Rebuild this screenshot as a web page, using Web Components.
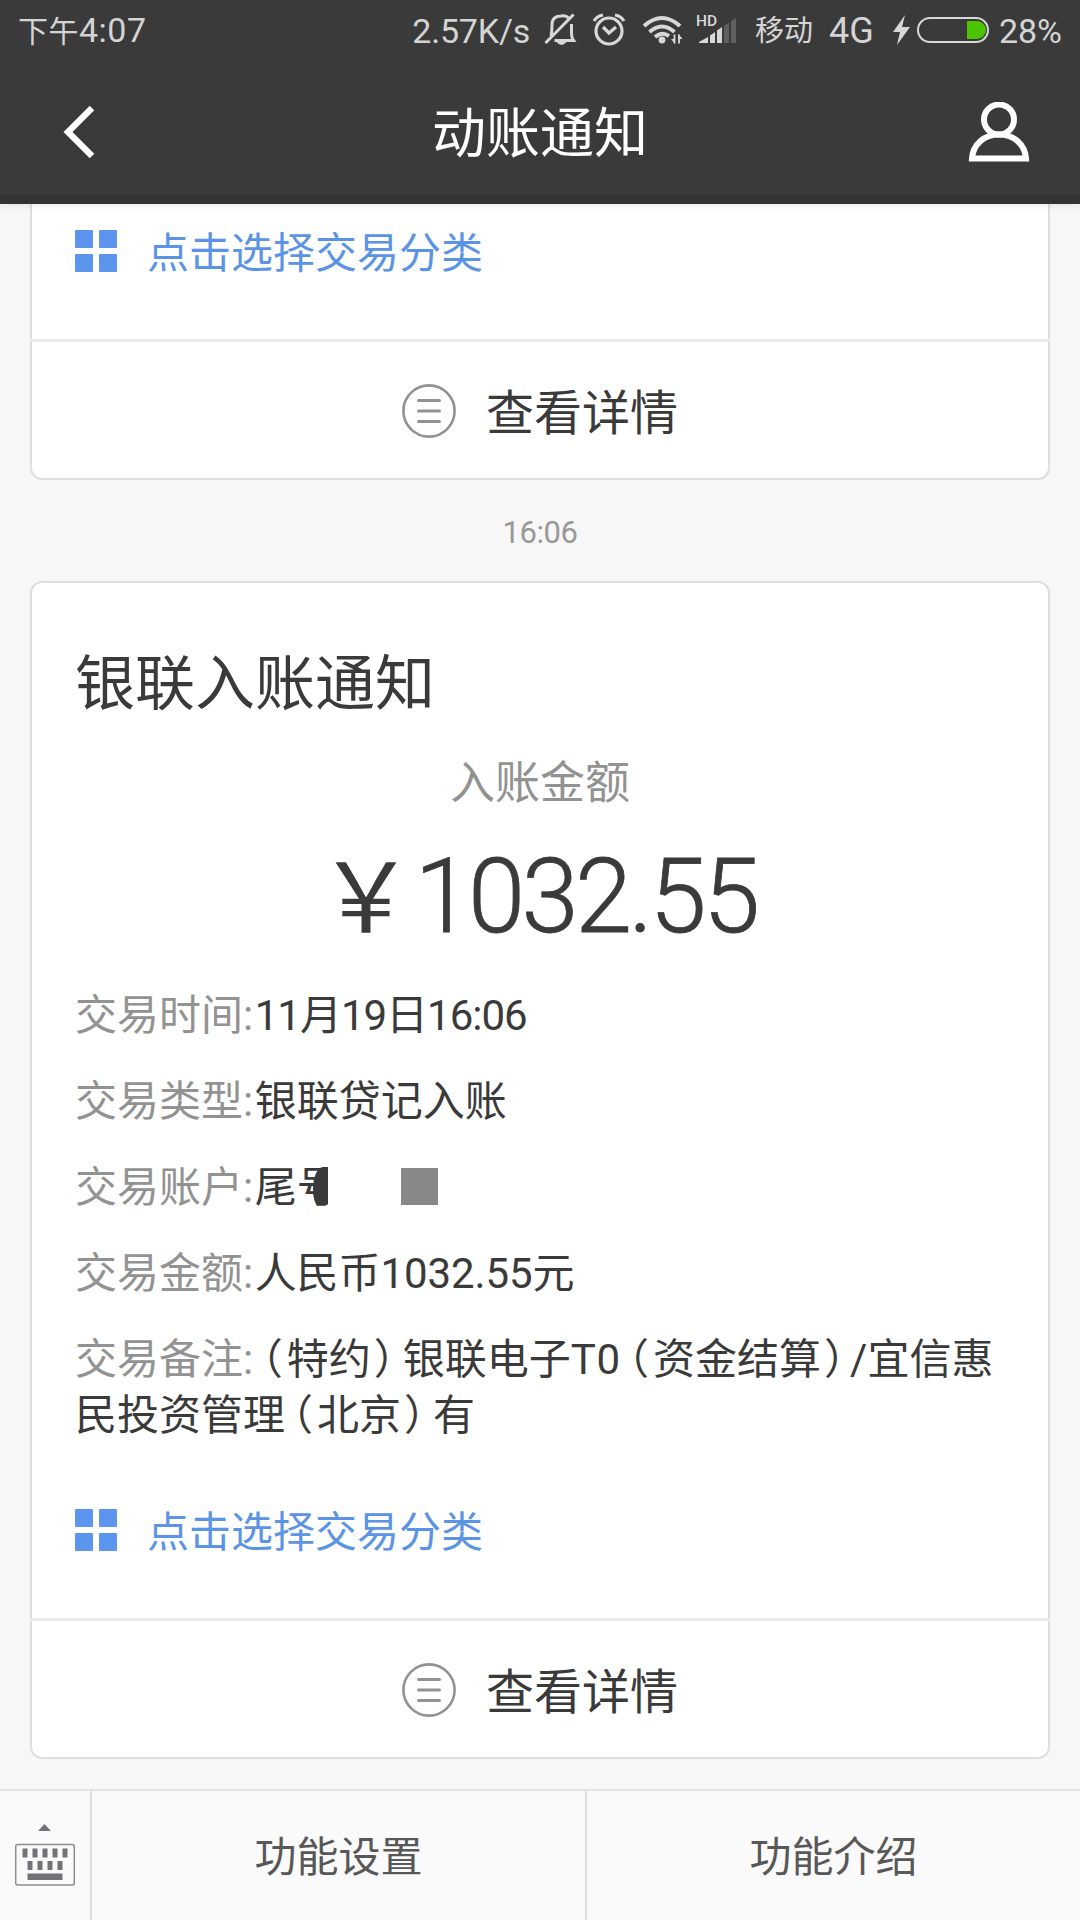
<!DOCTYPE html>
<html lang="zh-CN">
<head>
<meta charset="utf-8">
<title>动账通知</title>
<style>
  html, body {
    margin: 0;
    padding: 0;
  }
  body {
    width: 1080px;
    height: 1920px;
    overflow: hidden;
    display: flex;
    flex-direction: column;
    background: #f7f7f7;
    color: #3a3a3a;
    font-family: Roboto, "Noto Sans CJK SC", sans-serif;
  }
  main {
    flex: 1;
    min-height: 0;
    padding: 0 30px;
  }
  time {
    display: block;
    height: 101px;
    line-height: 105px;
    text-align: center;
    font-size: 31px;
    letter-spacing: -0.4px;
    color: #999;
  }
  .figure {
    font-size: 103px;
    font-weight: 300;
    letter-spacing: -3.6px;
    -webkit-text-stroke: 0.8px;
  }
  .narrow {
    letter-spacing: -1px;
  }
  .wide {
    letter-spacing: -0.1px;
  }
  /* full-width brackets set tighter than one em */
  .open, .close {
    font-feature-settings: "halt";
  }
  .open {
    margin: 0 4px 0 7px;
  }
  .close {
    margin: 0 8px 0 3px;
  }
  .close.tight {
    margin-right: 5px;
  }
  .code {
    letter-spacing: 0.8px;
  }
</style>
</head>
<body>
  <status-bar></status-bar>
  <nav-header>动账通知</nav-header>
  <main>
    <notice-card clipped>
      <category-link>点击选择交易分类</category-link>
      <span slot="action">查看详情</span>
    </notice-card>
    <time>16:06</time>
    <notice-card>
      <amount-summary>
        <span slot="title">银联入账通知</span>
        <span slot="caption">入账金额</span>
        <span slot="amount">￥<span class="figure">1032.55</span></span>
      </amount-summary>
      <detail-row label="交易时间:"><span class="narrow">11月19日16:06</span></detail-row>
      <detail-row label="交易类型:">银联贷记入账</detail-row>
      <detail-row label="交易账户:">尾<masked-text>号</masked-text></detail-row>
      <detail-row label="交易金额:"><span class="wide">人民币1032.55元</span></detail-row>
      <detail-row label="交易备注:"><span class="open">（</span>特约<span class="close">）</span>银联电子<span class="code">T0</span><span class="open">（</span>资金结算<span class="close tight">）</span>/宜信惠<br>民投资管理<span class="open">（</span>北京<span class="close">）</span>有</detail-row>
      <category-link>点击选择交易分类</category-link>
      <span slot="action">查看详情</span>
    </notice-card>
  </main>
  <tab-bar>
    <span slot="left">功能设置</span>
    <span slot="right">功能介绍</span>
  </tab-bar>

<script>
'use strict'
;(function() {
  // registers an element whose shadow root holds the given markup
  function define(name, html, setup) {
    customElements.define(name, class extends HTMLElement {
      constructor() {
        super()
        const shadow = this.attachShadow({ mode: 'open' })
        shadow.innerHTML = html
      }
      connectedCallback() {
        if (setup) setup(this, this.shadowRoot)
      }
    })
  }

  define('status-bar', `
    <style>
      :host {
        display: flex;
        align-items: center;
        flex: none;
        box-sizing: border-box;
        height: 62px;
        padding: 0 18px;
        background: #3a3a3a;
        color: #d4d4d4;
        font-size: 34px;
        line-height: 62px;
        white-space: nowrap;
      }
      svg { flex: none; display: block; }
      .cjk { font-size: 30px; }
      .clock { letter-spacing: 0.5px; }
      .speed { margin-left: auto; margin-right: 14px; letter-spacing: -0.2px; }
      .carrier { margin-left: 17px; margin-right: 16px; font-size: 29px; }
      .network { font-size: 36px; }
    </style>
    <span class="clock"><span class="cjk">下午</span>4:07</span>
    <span class="speed">2.57K/s</span>
    <!-- muted bell, alarm, wifi, HD signal -->
    <svg width="194" height="62" viewBox="544 0 194 62" fill="none" stroke="#d8d8d8" stroke-width="3">
      <path d="M551 36q1-4 1-11q0-9 9-9q6-1 9 4M571.500 24v8q0 6 2 8.500h-19M545.500 43l28-28.500"/>
      <path d="M556.500 42h10q-5 6-10 0z" fill="#d8d8d8" stroke="none"/>
      <circle cx="609" cy="31" r="13" stroke-width="3.2"/>
      <path d="M603 27l6 6l7-6M594 21q3-5 9-6M624 21q-3-5-9-6" stroke-width="3.2"/>
      <path d="M644 26q18-16 36 0M649.500 32q12.500-11 25 0M655 37q7-6 14-1" stroke-width="4"/>
      <circle cx="662" cy="40" r="3.4" fill="#d8d8d8" stroke="none"/>
      <path d="M674.500 34.500v9M679 43.500v-9" stroke-width="1.800"/>
      <path d="M675 44l-4-5h4zM678.500 34l4 5h-4z" fill="#d8d8d8" stroke="none"/>
      <text x="696" y="26" font-family="Roboto, sans-serif" font-size="15.5" font-weight="500" fill="#d8d8d8" stroke="none">HD</text>
      <g stroke="none" fill="#d8d8d8">
        <path d="M699 43v-1l9-5v6zM710 43v-7.500l5-3.500v11zM717 43V30.500l5-3.500v16z"/>
        <path d="M724 43V26l5-3.500v20.500zM731 43V21.500l5-3.500v25z" fill="#606060"/>
      </g>
    </svg>
    <span class="carrier">移动</span>
    <span class="network">4G</span>
    <!-- charging bolt and battery -->
    <svg width="100" height="62" viewBox="891 0 100 62" style="margin: 0 8px 0 17px">
      <path d="M905 15l-12 17h7l-3 13l13-18h-8z" fill="#d8d8d8"/>
      <rect x="918" y="18" width="70" height="24" rx="12" fill="none" stroke="#d8d8d8" stroke-width="2"/>
      <path d="M967 21h10a9 9 0 0 1 0 18h-10z" fill="#4bc400"/>
    </svg>
    <span>28%</span>
  `)

  define('nav-header', `
    <style>
      :host {
        display: grid;
        grid-template-columns: 150px 1fr 150px;
        align-items: center;
        flex: none;
        box-sizing: border-box;
        height: 142px;
        border-bottom: 9px solid #333;
        background: #3a3a3a;
        color: #fff;
        box-shadow: 0 2px 8px rgba(0, 0, 0, 0.08);
        z-index: 1;
      }
      h1 {
        margin: 13px 0 0;
        font-size: 54px;
        font-weight: inherit;
        line-height: 60px;
        text-align: center;
      }
      svg { display: block; margin-top: 7px; }
      svg.user { justify-self: end; margin-right: 50px; }
    </style>
    <svg width="100" height="60" viewBox="0 102 100 60">
      <path d="M92 108L68 132L92 156" fill="none" stroke="#fff" stroke-width="6.4"/>
    </svg>
    <h1><slot></slot></h1>
    <svg class="user" width="62" height="60" viewBox="968 102.500 62 60" fill="none" stroke="#fff" stroke-width="6">
      <circle cx="999" cy="120" r="15"/>
      <path d="M972 159C973 145 984 135 999 135S1025 145 1026 159z"/>
    </svg>
  `)

  define('notice-card', `
    <style>
      :host {
        display: block;
        box-sizing: border-box;
        border: 2px solid #dedede;
        border-radius: 12px;
        background: #fff;
      }
      /* scrolled halfway under the header */
      :host([clipped]) {
        border-top: 0;
        border-top-left-radius: 0;
        border-top-right-radius: 0;
        padding-top: 19px;
      }
      .body { padding: 0 44px; }
      .action {
        display: flex;
        align-items: center;
        justify-content: center;
        gap: 30px;
        height: 136px;
        margin: 0 -2px;
        border-top: 3px solid #ebebeb;
        font-size: 48px;
        line-height: 56px;
      }
      .action svg { margin-top: 2px; }
      .label { margin-top: 7px; }
    </style>
    <div class="body"><slot></slot></div>
    <div class="action">
      <svg width="54" height="54" viewBox="0 0 54 54" fill="none" stroke="#929292">
        <circle cx="27" cy="27" r="25.6" stroke-width="2.6"/>
        <path d="M16.5 16.5h21M16.5 27h21M16.5 37.5h21" stroke-width="3" stroke-linecap="round"/>
      </svg>
      <div class="label"><slot name="action"></slot></div>
    </div>
  `)

  define('amount-summary', `
    <style>
      :host { display: block; padding-top: 62px; }
      .title { margin-left: -1px; font-size: 60px; line-height: 80px; }
      .caption {
        margin-top: 29px;
        text-align: center;
        font-size: 45px;
        line-height: 60px;
        color: #929292;
      }
      .amount {
        height: 110px;
        margin: 28px 0 36px;
        padding-right: 6px;
        text-align: center;
        font-size: 97px;
        line-height: 110px;
      }
    </style>
    <div class="title"><slot name="title"></slot></div>
    <div class="caption"><slot name="caption"></slot></div>
    <div class="amount"><slot name="amount"></slot></div>
  `)

  define('detail-row', `
    <style>
      :host {
        display: block;
        margin-bottom: 30px;
        margin-left: -1px;
        font-size: 42px;
        line-height: 56px;
      }
      .label { margin-right: 1.5px; color: #929292; }
    </style>
    <span class="label"></span><slot></slot>
  `, function(host, shadow) {
    shadow.querySelector('.label').textContent = host.getAttribute('label')
  })

  define('masked-text', `
    <style>
      :host { display: inline-flex; align-items: center; height: 56px; vertical-align: top; }
      .cut { position: relative; width: 31px; height: 56px; overflow: hidden; }
      .cut i {
        position: absolute;
        right: 0;
        top: 7px;
        width: 15px;
        height: 37px;
        background: #3a3a3a;
        border-radius: 10px 0 0 4px / 22px 0 0 15px;
      }
      .block { width: 37px; height: 37px; margin: -4px 0 0 73px; background: #888; }
    </style>
    <span class="cut"><slot></slot><i></i></span>
    <span class="block"></span>
  `)

  define('category-link', `
    <style>
      :host {
        display: flex;
        align-items: center;
        gap: 30px;
        height: 56px;
        padding-bottom: 60px;
        margin-left: -1px;
        color: #5b94e4;
        font-size: 42px;
        line-height: 56px;
      }
      :host(:not(:first-child)) { margin-top: 58px; }
      span { margin-top: 5px; }
    </style>
    <svg width="42" height="42" viewBox="0 0 42 42" fill="#5b95ee">
      <rect width="18" height="18" rx="1"/>
      <rect x="24" width="18" height="18" rx="1"/>
      <rect y="24" width="18" height="18" rx="1"/>
      <rect x="24" y="24" width="18" height="18" rx="1"/>
    </svg>
    <span><slot></slot></span>
  `)

  define('tab-bar', `
    <style>
      :host {
        display: grid;
        grid-template-columns: 90px 495px 1fr;
        flex: none;
        box-sizing: border-box;
        height: 131px;
        border-top: 2px solid #e2e2e2;
        background: #fafafa;
        color: #585858;
        font-size: 42px;
        line-height: 133px;
        text-align: center;
      }
      .tab { height: 129px; border-left: 2px solid #dedede; }
    </style>
    <svg width="90" height="129" viewBox="0 1791 90 129" fill="#707479">
      <path d="M38 1831l6.5-7l6.5 7z"/>
      <rect x="15.7" y="1844.5" width="58.6" height="40.5" rx="2" fill="none" stroke="#8b8e92" stroke-width="1.5"/>
      <path d="M22.5 1848.5h5v9h-5zM32.5 1848.5h5v9h-5zM42.5 1848.5h5v9h-5zM52.5 1848.5h5v9h-5zM62.5 1848.5h5v9h-5zM27.5 1861h5v9h-5zM37.5 1861h5v9h-5zM47.5 1861h5v9h-5zM57.5 1861h5v9h-5zM27.5 1873.5h35v6.5h-35z"/>
    </svg>
    <div class="tab"><slot name="left"></slot></div>
    <div class="tab"><slot name="right"></slot></div>
  `)
})()
</script>
</body>
</html>
